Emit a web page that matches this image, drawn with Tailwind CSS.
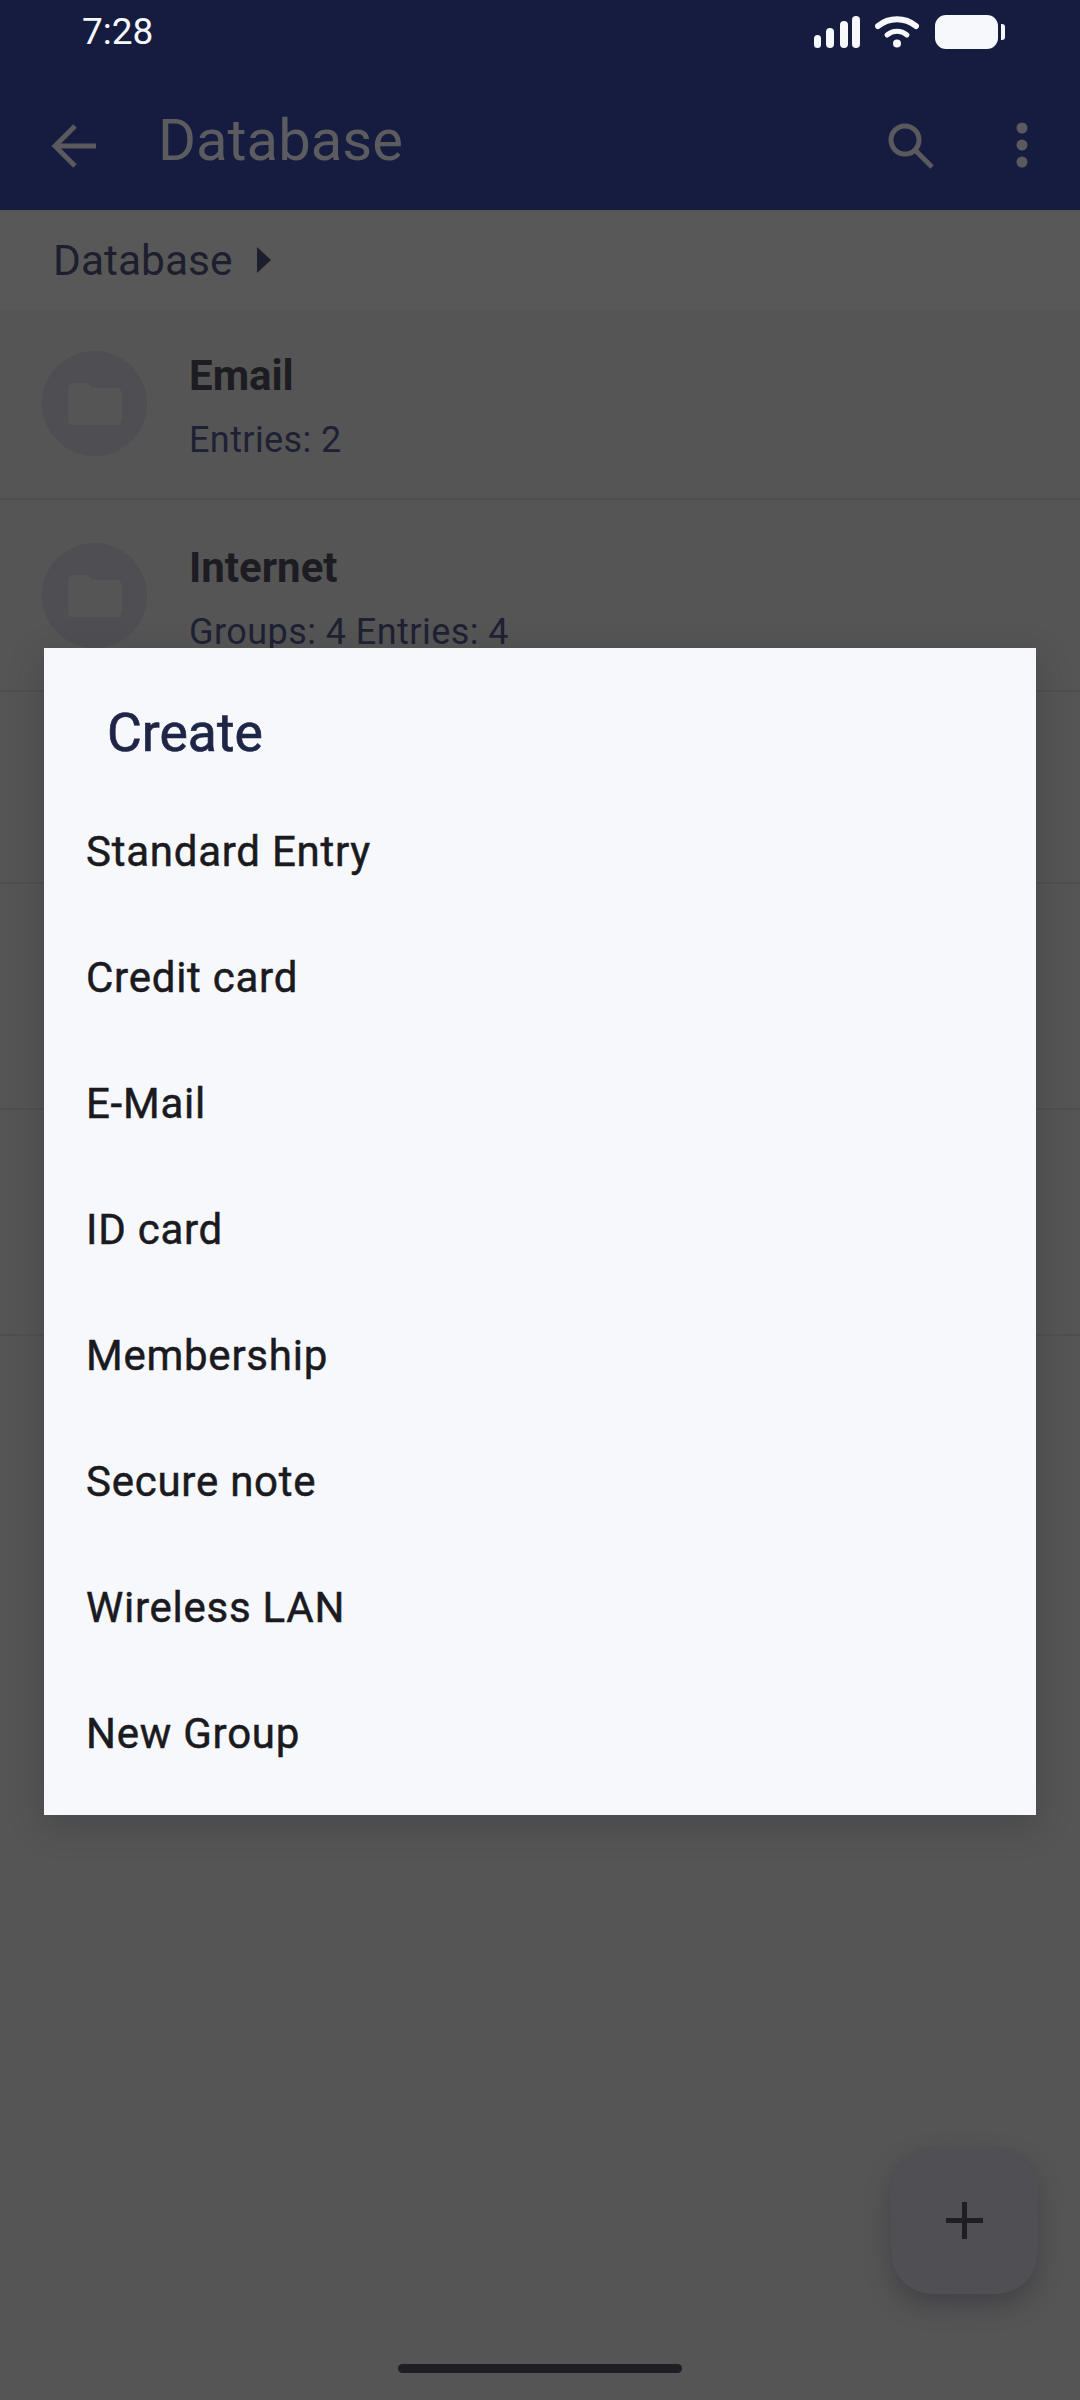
<!DOCTYPE html>
<html lang="en">

<head>
  <meta charset="UTF-8">
  <title>Database</title>
  <script src="https://cdn.jsdelivr.net/npm/@tailwindcss/browser@4"></script>
</head>

<body class="bg-[#555555]">
  <div class="relative w-[1080px] h-[2400px] overflow-hidden bg-[#555555] font-['Roboto',sans-serif]">

    <!-- Status bar + toolbar -->
    <header class="h-[210px] bg-[#161c3f]">
      <div class="h-[64px] flex items-center justify-between pl-[82px] pr-[75px]">
        <span class="text-[37px] leading-none text-[#f6f8fc] mt-[-2px]">7:28</span>
        <div class="flex items-center">
          <svg width="46" height="32" viewBox="0 0 46 32" fill="#f6f8fc">
            <rect x="0" y="19" width="7" height="13" rx="3.5"></rect>
            <rect x="12" y="12" width="8" height="20" rx="4"></rect>
            <rect x="26" y="5" width="8" height="27" rx="4"></rect>
            <rect x="38" y="0" width="8" height="32" rx="4"></rect>
          </svg>
          <svg class="ml-[15px]" width="44" height="32" viewBox="0 0 44 32" fill="none" stroke="#f6f8fc" stroke-linecap="round">
            <path d="M3 10C14 1 30 1 41 10" stroke-width="6"></path>
            <path d="M12 19C18 14 26 14 32 19" stroke-width="5"></path>
            <circle cx="22" cy="27.5" r="4" fill="#f6f8fc" stroke="none"></circle>
          </svg>
          <div class="ml-[16px] w-[63px] h-[34px] rounded-[11px] bg-[#f6f8fc]"></div>
          <div class="ml-[3px] w-[4px] h-[16px] rounded-r-[3px] bg-[#f6f8fc]"></div>
        </div>
      </div>
      <div class="flex items-center h-[146px] pl-[50px] pr-[52px] pt-[18px]">
        <svg width="48" height="48" viewBox="0 0 48 48" fill="none" stroke="#5a5a5e" stroke-width="5">
          <path d="M46 24H6M25 4L5 24l20 20"></path>
        </svg>
        <h1 class="ml-[60px] text-[58px] leading-none text-[#5c5c60] mt-[-13px]">Database</h1>
        <svg class="ml-auto" width="48" height="48" viewBox="0 0 48 48" fill="none" stroke="#5a5a5e" stroke-width="5">
          <circle cx="18" cy="18" r="14"></circle>
          <path d="M28 28l17 17"></path>
        </svg>
        <svg class="ml-[81px] mt-[-2px]" width="12" height="46" viewBox="0 0 12 46" fill="#5a5a5e">
          <circle cx="6" cy="6" r="5.5"></circle>
          <circle cx="6" cy="23" r="5.5"></circle>
          <circle cx="6" cy="40" r="5.5"></circle>
        </svg>
      </div>
    </header>

    <!-- Breadcrumb -->
    <div class="h-[100px] bg-[#585858] flex items-center pl-[53px] pt-[2px]">
      <span class="text-[42.5px] leading-none text-[#1e1f2e]">Database</span>
      <svg class="ml-[25px] mt-[-3px]" width="14" height="26" viewBox="0 0 14 26" fill="#1e1f2e">
        <path d="M0 0l14 13L0 26z"></path>
      </svg>
    </div>

    <!-- Groups -->
    <ul>
      <li class="h-[190px] border-b-2 border-[#4f4f53] flex pl-[42px] pt-[41px]">
        <span class="w-[105px] h-[105px] rounded-full bg-[#4e4e53] flex items-center justify-center">
          <svg width="54" height="42" viewBox="0 0 54 42" fill="#555555">
            <path d="M5 0h14l6 5h24a5 5 0 0 1 5 5v27a5 5 0 0 1-5 5H5a5 5 0 0 1-5-5V5a5 5 0 0 1 5-5z"></path>
          </svg>
        </span>
        <div class="ml-[42px] mt-[1px]">
          <div class="text-[42px] leading-[48px] font-bold text-[#1c1c22]">Email</div>
          <div class="mt-[17px] text-[36px] leading-[46px] tracking-[0.4px] text-[#1e2133]">Entries: 2</div>
        </div>
      </li>
      <li class="h-[192px] border-b-2 border-[#4f4f53] flex pl-[42px] pt-[43px]">
        <span class="w-[105px] h-[105px] rounded-full bg-[#4e4e53] flex items-center justify-center">
          <svg width="54" height="42" viewBox="0 0 54 42" fill="#555555">
            <path d="M5 0h14l6 5h24a5 5 0 0 1 5 5v27a5 5 0 0 1-5 5H5a5 5 0 0 1-5-5V5a5 5 0 0 1 5-5z"></path>
          </svg>
        </span>
        <div class="ml-[42px] mt-[1px]">
          <div class="text-[42px] leading-[48px] font-bold text-[#1c1c22]">Internet</div>
          <div class="mt-[17px] text-[36px] leading-[46px] tracking-[0.45px] text-[#1e2133]">Groups: 4 Entries: 4</div>
        </div>
      </li>
      <li class="h-[192px] border-b-2 border-[#4f4f53]"></li>
      <li class="h-[226px] border-b-2 border-[#4f4f53]"></li>
      <li class="h-[226px] border-b-2 border-[#4f4f53]"></li>
    </ul>

    <!-- Create dialog -->
    <div class="absolute left-[44px] top-[648px] w-[992px] h-[1167px] bg-[#f6f8fc] shadow-[0_10px_32px_rgba(40,40,50,0.3)]">
      <h2 class="pl-[63px] pt-[55px] text-[53.5px] leading-[60px] font-normal [-webkit-text-stroke:0.7px_#1f2546] text-[#1f2546]">Create</h2>
      <ul class="mt-[26px] pl-[42px] text-[42px] leading-[126px] font-normal [-webkit-text-stroke:0.5px_#1a1a20] tracking-[0.75px] text-[#1a1a20]">
        <li>Standard Entry</li>
        <li>Credit card</li>
        <li>E-Mail</li>
        <li>ID card</li>
        <li>Membership</li>
        <li>Secure note</li>
        <li>Wireless LAN</li>
        <li>New Group</li>
      </ul>
    </div>

    <!-- FAB -->
    <button class="absolute left-[891px] top-[2147px] w-[147px] h-[147px] rounded-[42px] bg-[#4f4f54] shadow-[0_12px_24px_rgba(40,40,50,0.4)] flex items-center justify-center">
      <svg width="37" height="37" viewBox="0 0 37 37" fill="#1e1e24">
        <rect x="0" y="16" width="37" height="5"></rect>
        <rect x="16" y="0" width="5" height="37"></rect>
      </svg>
    </button>

    <!-- Gesture bar -->
    <div class="absolute left-[398px] top-[2364px] w-[284px] h-[9px] rounded-full bg-[#1e1e24]"></div>
  </div>
</body>

</html>
